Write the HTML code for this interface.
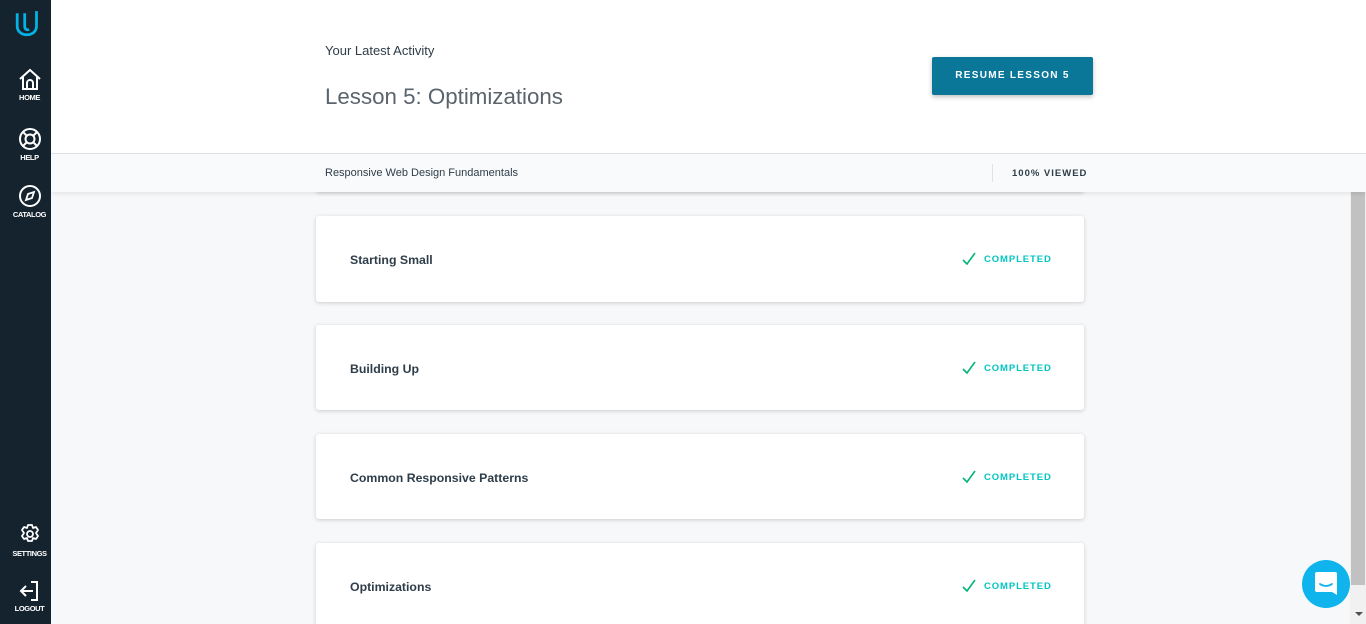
<!DOCTYPE html>
<html><head><style>
*{margin:0;padding:0;box-sizing:border-box}
html,body{width:1366px;height:624px;overflow:hidden}
body{background:#f7f8fa;font-family:"Liberation Sans",sans-serif;position:relative}
.side{position:absolute;left:0;top:0;width:51px;height:624px;background:#15232f;z-index:5}
.nav{position:absolute;left:4px;width:51px;text-align:center;color:#fff;font-size:7.5px;font-weight:bold;letter-spacing:-0.4px}
.nav svg{display:block;margin:0 auto 2px}
.head{position:absolute;left:51px;top:0;right:0;height:154px;background:#fff;border-bottom:1px solid #dfe3e8;z-index:3}
.sub{position:absolute;left:51px;top:154px;right:0;height:38px;background:#f9fafb;z-index:3;box-shadow:0 2px 4px rgba(0,0,0,.08)}
.card{position:absolute;left:316px;width:768px;background:#fff;border-radius:3px;box-shadow:0 1px 4px rgba(0,0,0,.18)}
.card .t{position:absolute;left:34px;top:37px;font-size:12.3px;font-weight:bold;color:#2e3d49}
.card .c{position:absolute;left:668px;top:38px;font-size:9.5px;font-weight:bold;color:#02c5c2;letter-spacing:0.9px}
.card .c svg{position:absolute;left:-22px;top:-2px}
.sb{position:absolute;left:1350px;top:192px;width:16px;height:432px;background:#f1f1f1}
.thumb{position:absolute;left:1351px;top:192px;width:14px;height:393px;background:#c1c1c1}
</style></head><body>
<div class="side">
<svg style="position:absolute;left:14px;top:9px" width="30" height="30" viewBox="0 0 28 28"><path d="M3 4v12c0 5 4 8 9 8s9-3 9-8V2M10 4v12c0 3 2 4 4 3" fill="none" stroke="#02b3e4" stroke-width="2.6" stroke-linejoin="round"/></svg>
<div class="nav" style="top:68px"><svg width="24" height="23" viewBox="0 0 24 23"><path d="M2 11L12 2l10 9M5 9v12h14V9M9 21v-6a3 3 0 016 0v6" fill="none" stroke="#fff" stroke-width="2"/></svg>HOME</div>
<div class="nav" style="top:127px"><svg width="24" height="24" viewBox="0 0 24 24"><circle cx="12" cy="12" r="10" fill="none" stroke="#fff" stroke-width="2"/><circle cx="12" cy="12" r="4.5" fill="none" stroke="#fff" stroke-width="2"/><path d="M5 5l4 4M19 5l-4 4M5 19l4-4M19 19l-4-4" stroke="#fff" stroke-width="2"/></svg>HELP</div>
<div class="nav" style="top:184px"><svg width="24" height="24" viewBox="0 0 24 24"><circle cx="12" cy="12" r="10" fill="none" stroke="#fff" stroke-width="2"/><path d="M16 8l-2 6-6 2 2-6z" fill="none" stroke="#fff" stroke-width="1.8"/></svg>CATALOG</div>
<div class="nav" style="top:523px"><svg width="24" height="24" viewBox="0 0 24 24"><path d="M10 2h4l1 3 3-1 2 3-2 3 2 3-2 3-3-1-1 3h-4l-1-3-3 1-2-3 2-3-2-3 2-3 3 1z" fill="none" stroke="#fff" stroke-width="1.8" stroke-linejoin="round"/><circle cx="12" cy="11" r="3" fill="none" stroke="#fff" stroke-width="1.8"/></svg>SETTINGS</div>
<div class="nav" style="top:580px"><svg width="24" height="22" viewBox="0 0 24 22"><path d="M13 2h6v18h-6M15 11H4M8 6l-5 5 5 5" fill="none" stroke="#fff" stroke-width="2"/></svg>LOGOUT</div>
</div>
<div class="head">
<div style="position:absolute;left:274px;top:43px;font-size:13px;color:#2e3d49">Your Latest Activity</div>
<div style="position:absolute;left:274px;top:84px;font-size:22.3px;color:#5b646c">Lesson 5: Optimizations</div>
<div style="position:absolute;left:881px;top:57px;width:161px;height:38px;background:#0a7799;border-radius:2px;box-shadow:0 2px 5px rgba(0,0,0,.25);color:#fff;font-size:10px;font-weight:bold;letter-spacing:1.3px;text-align:center;line-height:38px">RESUME LESSON 5</div>
</div>
<div class="sub">
<div style="position:absolute;left:274px;top:13px;font-size:11px;color:#2e3d49">Responsive Web Design Fundamentals</div>
<div style="position:absolute;left:941px;top:10px;width:1px;height:18px;background:#dbe2e8"></div>
<div style="position:absolute;left:961px;top:14px;font-size:9.5px;font-weight:bold;color:#2e3d49;letter-spacing:1px">100% VIEWED</div>
</div>
<div class="card" style="top:150px;height:42px"></div>
<div class="card" style="top:216px;height:86px"><div class="t">Starting Small</div><div class="c"><svg width="14" height="14" viewBox="0 0 14 14"><path d="M1 8l4 4 8-11" fill="none" stroke="#02b37a" stroke-width="1.6"/></svg>COMPLETED</div></div>
<div class="card" style="top:325px;height:85px"><div class="t">Building Up</div><div class="c"><svg width="14" height="14" viewBox="0 0 14 14"><path d="M1 8l4 4 8-11" fill="none" stroke="#02b37a" stroke-width="1.6"/></svg>COMPLETED</div></div>
<div class="card" style="top:434px;height:85px"><div class="t">Common Responsive Patterns</div><div class="c"><svg width="14" height="14" viewBox="0 0 14 14"><path d="M1 8l4 4 8-11" fill="none" stroke="#02b37a" stroke-width="1.6"/></svg>COMPLETED</div></div>
<div class="card" style="top:543px;height:100px"><div class="t">Optimizations</div><div class="c"><svg width="14" height="14" viewBox="0 0 14 14"><path d="M1 8l4 4 8-11" fill="none" stroke="#02b37a" stroke-width="1.6"/></svg>COMPLETED</div></div>
<div class="sb"></div><div class="thumb"></div>
<div style="position:absolute;left:1355px;top:612px;width:0;height:0;border-left:4px solid transparent;border-right:4px solid transparent;border-top:4px solid #505050"></div>
<div style="position:absolute;left:1302px;top:560px;width:48px;height:48px;border-radius:50%;background:#0eb4eb"></div>
<svg style="position:absolute;left:1314px;top:571px" width="24" height="26" viewBox="0 0 24 26"><path d="M3 1h18a2 2 0 012 2v21l-5-3H3a2 2 0 01-2-2V3a2 2 0 012-2z" fill="#fff"/><path d="M6 13q6 4 12 0" fill="none" stroke="#0eb4eb" stroke-width="1.8" stroke-linecap="round"/></svg>
</body></html>
